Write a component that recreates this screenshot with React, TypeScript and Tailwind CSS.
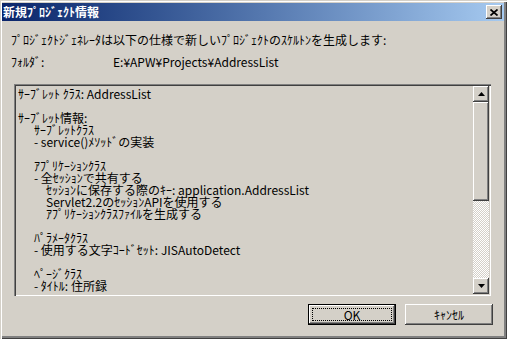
const raised =
  "shadow-[inset_-1px_-1px_#404040,inset_1px_1px_#ffffff,inset_-2px_-2px_#808080,inset_2px_2px_#d4d0c8]";

const lines: { text: string; indent: number }[] = [
  { text: "ｻｰﾌﾞﾚｯﾄ ｸﾗｽ: AddressList", indent: 0 },
  { text: "", indent: 0 },
  { text: "ｻｰﾌﾞﾚｯﾄ情報:", indent: 0 },
  { text: "ｻｰﾌﾞﾚｯﾄｸﾗｽ", indent: 1 },
  { text: "- service()ﾒｿｯﾄﾞの実装", indent: 1 },
  { text: "", indent: 0 },
  { text: "ｱﾌﾟﾘｹｰｼｮﾝｸﾗｽ", indent: 1 },
  { text: "- 全ｾｯｼｮﾝで共有する", indent: 1 },
  { text: "ｾｯｼｮﾝに保存する際のｷｰ: application.AddressList", indent: 2 },
  { text: "Servlet2.2のｾｯｼｮﾝAPIを使用する", indent: 2 },
  { text: "ｱﾌﾟﾘｹｰｼｮﾝｸﾗｽﾌｧｲﾙを生成する", indent: 2 },
  { text: "", indent: 0 },
  { text: "ﾊﾟﾗﾒｰﾀｸﾗｽ", indent: 1 },
  { text: "- 使用する文字ｺｰﾄﾞｾｯﾄ: JISAutoDetect", indent: 1 },
  { text: "", indent: 0 },
  { text: "ﾍﾟｰｼﾞｸﾗｽ", indent: 1 },
  { text: "- ﾀｲﾄﾙ: 住所録", indent: 1 },
];

function Arrow({ up }: { up: boolean }) {
  return (
    <svg width="7" height="4" viewBox="0 0 7 4">
      <path d={up ? "M3.5 0L7 4H0z" : "M0 0h7L3.5 4z"} fill="#000" />
    </svg>
  );
}

function ScrollBar() {
  return (
    <div className="w-[16px] h-full flex flex-col bg-[image:repeating-conic-gradient(#ffffff_0%_25%,#d4d0c8_0%_50%)] bg-size-[2px_2px]">
      <div className={`h-[16px] bg-[#d4d0c8] flex items-center justify-center ${raised}`}>
        <Arrow up />
      </div>
      <div className={`h-[99px] bg-[#d4d0c8] ${raised}`} />
      <div className="flex-1" />
      <div className={`h-[16px] bg-[#d4d0c8] flex items-center justify-center ${raised}`}>
        <Arrow up={false} />
      </div>
    </div>
  );
}

export default function App() {
  return (
    <div className="w-[507px] h-[339px] bg-[#d4d0c8] font-['Noto_Sans_CJK_JP',sans-serif] text-[12px] leading-[12px] text-black pt-[3px] shadow-[inset_1px_1px_#d4d0c8,inset_2px_2px_#ffffff,inset_-1px_-1px_#404040,inset_-3px_-3px_#808080]">
      <div className="ml-[2px] mr-[3px] h-[18px] bg-gradient-to-r from-[#0a246a] to-[#a6caf0] flex items-center justify-between">
        <span className="pl-[1px] text-white font-bold">新規ﾌﾟﾛｼﾞｪｸﾄ情報</span>
        <button className={`mr-[2px] w-[16px] h-[14px] bg-[#d4d0c8] flex items-center justify-center ${raised}`}>
          <svg width="8" height="7" viewBox="0 0 8 7">
            <path d="M0.5 0.5L7.5 6.5M7.5 0.5L0.5 6.5" stroke="#000" strokeWidth="1.7" />
          </svg>
        </button>
      </div>

      <p className="mt-[13px] ml-[11px]">
        ﾌﾟﾛｼﾞｪｸﾄｼﾞｪﾈﾚｰﾀは以下の仕様で新しいﾌﾟﾛｼﾞｪｸﾄのｽｹﾙﾄﾝを生成します:
      </p>
      <div className="mt-[10px] ml-[11px] flex">
        <span className="w-[102px]">ﾌｫﾙﾀﾞ:</span>
        <span>E:¥APW¥Projects¥AddressList</span>
      </div>

      <div className="mt-[16px] ml-[14px] w-[477px] h-[212px] p-[2px] flex shadow-[inset_1px_1px_#808080,inset_2px_2px_#404040,inset_-1px_-1px_#ffffff,inset_-2px_-2px_#d4d0c8]">
        <div className="flex-1 pt-[2px] pl-[2px]">
          {lines.map((l, i) => (
            <div
              key={i}
              className={`h-[12px] whitespace-pre ${l.indent === 1 ? "pl-[16px]" : l.indent === 2 ? "pl-[28px]" : ""}`}
            >
              {l.text}
            </div>
          ))}
        </div>
        <ScrollBar />
      </div>

      <div className="mt-[8px] pr-[14px] flex justify-end gap-[9px]">
        <button className="w-[88px] h-[21px] border border-black p-0">
          <div className={`w-full h-full bg-[#d4d0c8] p-[3px] ${raised}`}>
            <div className="w-full h-full border border-dotted border-black flex items-center justify-center">
              OK
            </div>
          </div>
        </button>
        <button className={`w-[88px] h-[21px] bg-[#d4d0c8] flex items-center justify-center ${raised}`}>
          ｷｬﾝｾﾙ
        </button>
      </div>
    </div>
  );
}
